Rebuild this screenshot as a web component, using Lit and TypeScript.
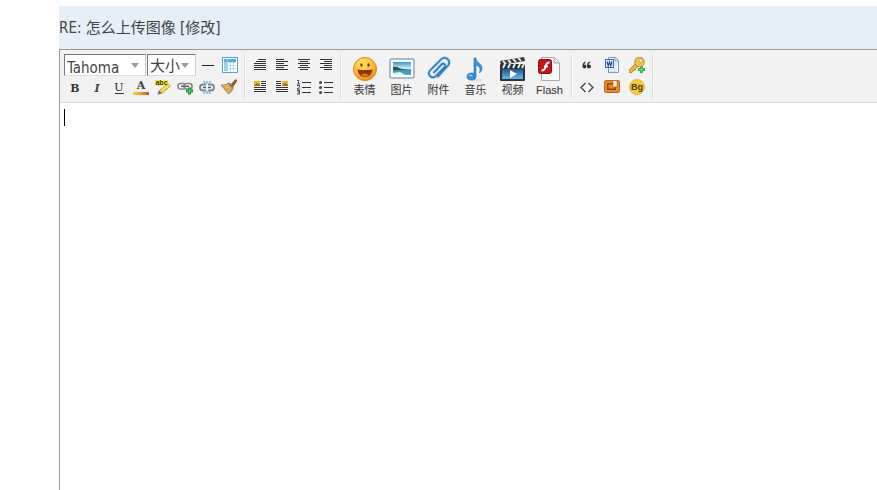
import { LitElement, html, css, svg, TemplateResult } from "lit";
import { customElement } from "lit/decorators.js";

interface Tool {
  label: string;
  art: TemplateResult;
}

const bars = (rows: number[][]) =>
  svg`${rows.map(([x, y, w]) => svg`<rect x=${x} y=${y} width=${w} height="1" fill="#333"/>`)}`;

const bold: Tool = {
  label: "Bold",
  art: svg`<text x="8" y="13" text-anchor="middle" font-family="DejaVu Serif, serif" font-weight="bold" font-size="11" fill="#333">B</text>`,
};
const italic: Tool = {
  label: "Italic",
  art: svg`<text x="8" y="13" text-anchor="middle" font-family="DejaVu Serif, serif" font-style="italic" font-weight="bold" font-size="11" fill="#444">I</text>`,
};
const underline: Tool = {
  label: "Underline",
  art: svg`<text x="8" y="12" text-anchor="middle" font-family="DejaVu Serif, serif" font-size="11" fill="#222">U</text><rect x="4" y="14" width="9" height="1" fill="#333"/>`,
};
const color: Tool = {
  label: "Text color",
  art: svg`<defs><linearGradient id="c"><stop offset="0" stop-color="#f8cf3c"/><stop offset=".5" stop-color="#ef9a37"/><stop offset="1" stop-color="#c4512c"/></linearGradient></defs>
    <text x="8" y="10" text-anchor="middle" font-family="DejaVu Serif, serif" font-weight="bold" font-size="11" fill="#444">A</text>
    <rect x="0" y="13" width="16" height="3" fill="url(#c)"/>`,
};
const highlight: Tool = {
  label: "Highlight",
  art: svg`<rect x="0" y="1" width="13" height="6" fill="#fbf04a"/>
    <text x="6.5" y="6" text-anchor="middle" font-family="Liberation Sans, sans-serif" font-weight="bold" font-size="7" fill="#333">abc</text>
    <path d="M4 13l1-2 8-6 2.500 2-8 7z" fill="#ead52a" stroke="#99861f" stroke-width=".6"/><path d="M6 12l8-6" stroke="#fff59a"/><path d="M2.500 15.500l1.500-4 3 3z" fill="#666"/>`,
};
const link: Tool = {
  label: "Insert link",
  art: svg`<g fill="#f4f5f5" stroke="#85898b" stroke-width="1.6"><rect x="1" y="4.500" width="8" height="5.500" rx="2.500"/><rect x="7" y="4.500" width="8" height="5.500" rx="2.500"/></g>
    <path d="M4 7.300h8" stroke="#666" stroke-width="1.6"/><path d="M12.500 8.500v7M9 12h7" stroke="#23913a" stroke-width="3"/><path d="M12.500 9.500v5M10 12h5" stroke="#5cc85c" stroke-width="1.200"/>`,
};
const unlink: Tool = {
  label: "Remove link",
  art: svg`<g fill="none" stroke="#7b858d" stroke-width="1.800"><path d="M7 5.500H4a3 3 0 0 0 0 6h3M9 5.500h3a3 3 0 0 1 0 6H9"/></g>
    <path d="M4 8.500h3M9 8.500h3" stroke="#475662" stroke-width="1.500"/><path d="M8 2v3M4.500 2l1.500 2.500M11.500 2L10 4.500M8 15v-3M4.500 15L6 12.500M11.500 15L10 12.500" stroke="#459bd2"/>`,
};
const brush: Tool = {
  label: "Clear format",
  art: svg`<path d="M10.500 5l4-4.500 1.500 1-3.500 5.500z" fill="#9a5725" stroke="#6d3814" stroke-width=".6"/><path d="M8 3.500l5 4-2 3-5-5z" fill="#8d7156"/>
    <path d="M7 4.500l5 5c-1 3-2.500 4-4.500 5.500L0 6c2 0 5 0 7-1.500z" fill="#d3a05c" stroke="#8e5a26" stroke-width=".6"/><path d="M2 7l6-1M4 9.500l5-2M6 12.500l4-4" stroke="#f2cb83" stroke-width=".8"/>`,
};
const rule: Tool = { label: "Horizontal line", art: svg`<rect x="2" y="8" width="12" height="1" fill="#222"/>` };
const grid: Tool = {
  label: "Table",
  art: svg`<rect x=".5" y=".5" width="15" height="15" fill="#fff" stroke="#55a3c7"/><rect x="2" y="2" width="12" height="3" fill="#4fb0dd"/><rect x="2" y="5" width="3" height="9" fill="#8fd0ee"/>
    <path d="M5.500 2v12M8.500 5v9M11.500 5v9M2 5.500h12M2 8.500h12M2 11.500h12" stroke="#a9d6ea" stroke-width=".8"/>`,
};

const alignAuto: Tool = { label: "Auto format", art: bars([[6, 2, 8], [4, 4, 10], [2, 6, 12], [2, 8, 12], [2, 10, 12], [2, 12, 12]]) };
const alignLeft: Tool = { label: "Align left", art: bars([[2, 2, 8], [2, 4, 12], [2, 6, 8], [2, 8, 12], [2, 10, 8], [2, 12, 12]]) };
const alignCenter: Tool = { label: "Align center", art: bars([[2, 2, 12], [4, 4, 8], [2, 6, 12], [4, 8, 8], [2, 10, 12], [4, 12, 8]]) };
const alignRight: Tool = { label: "Align right", art: bars([[2, 2, 12], [6, 4, 8], [2, 6, 12], [6, 8, 8], [2, 10, 12], [6, 12, 8]]) };
const floatLeft: Tool = {
  label: "Float left",
  art: svg`${bars([[9, 2, 5], [9, 4, 5], [9, 6, 5], [2, 8, 12], [2, 10, 12], [2, 12, 12]])}<rect x="2" y="2" width="6" height="5" fill="#e3bd25"/><path d="M2 7l3-3 3 2v1z" fill="#8c7310"/>`,
};
const floatRight: Tool = {
  label: "Float right",
  art: svg`${bars([[2, 2, 5], [2, 4, 5], [2, 6, 5], [2, 8, 12], [2, 10, 12], [2, 12, 12]])}<rect x="8" y="2" width="6" height="5" fill="#e3bd25"/><path d="M8 7l3-3 3 2v1z" fill="#8c7310"/>`,
};
const numbered: Tool = {
  label: "Numbered list",
  art: svg`${bars([[6, 3, 9], [6, 8, 9], [6, 13, 9]])}<path d="M1 1.500h1.500V5M1 5h3M1 6.500h2.500v1.700L1 10h3M1 11.500h2.500V15H1M1.500 13h2" fill="none" stroke="#333" stroke-width=".9"/>`,
};
const bulleted: Tool = {
  label: "Bulleted list",
  art: svg`${bars([[6, 3, 9], [6, 8, 9], [6, 13, 9]])}<g fill="#444"><circle cx="2.500" cy="3.500" r="1.500"/><circle cx="2.500" cy="8.500" r="1.500"/><circle cx="2.500" cy="13.500" r="1.500"/></g>`,
};

const quote: Tool = {
  label: "Quote",
  art: svg`<g fill="#333"><circle cx="5.500" cy="9.500" r="1.900"/><circle cx="10" cy="9.500" r="1.900"/></g><path d="M4.300 9.500c-.3-2 .2-3.500 2-4.500M8.800 9.500c-.3-2 .2-3.500 2-4.500" fill="none" stroke="#333" stroke-width="1.400"/>`,
};
const code: Tool = { label: "Code", art: svg`<path d="M6.500 4L2 8.500l4.500 4.500M9.500 4l4.500 4.500L9.500 13" fill="none" stroke="#444" stroke-width="1.300"/>` };
const word: Tool = {
  label: "Paste from Word",
  art: svg`<path d="M4.500 .500h7l3 3v12h-10z" fill="#fafcff" stroke="#7b94c0"/><path d="M11 1v3h3" fill="none" stroke="#7b94c0"/><path d="M10 6h3M10 8h3M6 12h7M6 14h7" stroke="#c3d1e8"/>
    <rect x="1.500" y="2.500" width="8" height="8" fill="#e8f0fc" stroke="#3f68b2"/><path d="M3 4.500l1.200 4.500L5.500 5l1.300 4L8 4.500" fill="none" stroke="#1d4aa0" stroke-width="1.200"/>`,
};
const key: Tool = {
  label: "Password",
  art: svg`<path d="M7 6L0 13v2.500h3l1-2h2l1-2 3-3z" fill="#e5b443" stroke="#a97b20" stroke-width=".7"/><circle cx="10.500" cy="5" r="4.800" fill="#f0c14b" stroke="#ad8025" stroke-width=".8"/><circle cx="12" cy="3.500" r="1.500" fill="#fff" stroke="#ad8025" stroke-width=".5"/>
    <path d="M12.500 9.500V16M9 12.500h7" stroke="#3aab44" stroke-width="2.800"/><path d="M12.500 10.500v4.500M10 12.500h5" stroke="#6bd070"/>`,
};
const page: Tool = {
  label: "Pagination",
  art: svg`<rect x=".500" y="1.500" width="15" height="12" rx="1.500" fill="#e8892b" stroke="#c0681a"/><rect x="3" y="4" width="9" height="7" fill="#8e4a1b"/><rect x="4.500" y="5.500" width="6" height="4" fill="#e8892b"/><rect x="9" y="1.500" width="4" height="6.500" fill="#fff8e8" stroke="#b4611b" stroke-width=".6"/>`,
};
const background: Tool = {
  label: "Background",
  art: svg`<circle cx="8" cy="8" r="7.500" fill="#f4cb3a" stroke="#e3b73a"/><text x="8" y="11" text-anchor="middle" font-family="Liberation Sans, sans-serif" font-size="9" font-weight="bold" fill="#4b3c0c">Bg</text>`,
};

const media: Tool[] = [
  {
    label: "表情",
    art: svg`<defs><radialGradient id="s" cx=".4" cy=".25" r=".8"><stop offset="0" stop-color="#ffe468"/><stop offset=".6" stop-color="#fdb72d"/><stop offset="1" stop-color="#ea8714"/></radialGradient></defs>
      <circle cx="14" cy="15" r="11.500" fill="url(#s)" stroke="#d68925"/><ellipse cx="10.500" cy="11" rx="1.200" ry="1.800" fill="#66350c"/><ellipse cx="17.500" cy="11" rx="1.200" ry="1.800" fill="#66350c"/>
      <path d="M6.500 15.500q7.500 1 15 0c-.5 5-3.500 7.500-7.500 7.500s-7-2.500-7.500-7.500z" fill="#8b3910"/><path d="M10 21q4-3 8 0-4 3-8 0z" fill="#ef7333"/>`,
  },
  {
    label: "图片",
    art: svg`<defs><linearGradient id="p" x2="0" y2="1"><stop offset="0" stop-color="#3f8fd5"/><stop offset=".5" stop-color="#d0eefa"/><stop offset=".6" stop-color="#3991b7"/><stop offset="1" stop-color="#4fa9cf"/></linearGradient></defs>
      <rect x="2" y="5" width="24" height="19" rx="1.500" fill="#fff" stroke="#91a8b5" stroke-width="1.500"/><rect x="5" y="8" width="18" height="13" fill="url(#p)"/><path d="M5 13q4-1 7 1.500l8 1.500H5z" fill="#24584f"/><path d="M5 19l7-1q3 2 6 3H5z" fill="#e3f3f3"/>`,
  },
  {
    label: "附件",
    art: svg`<g fill="none" stroke-linecap="round"><path d="M9 18.500l8-8.500a2 2 0 0 1 3 2.500l-9 9.500a4 4 0 0 1-6-5.500L16 5.500a4.600 4.600 0 0 1 7 0 4.600 4.600 0 0 1 0 6L13 22.500" stroke="#c5dfef" stroke-width="3.600"/>
      <path d="M9 18.500l8-8.500a2 2 0 0 1 3 2.500l-9 9.500a4 4 0 0 1-6-5.500L16 5.500a4.600 4.600 0 0 1 7 0 4.600 4.600 0 0 1 0 6L13 22.500" stroke="#2679bb" stroke-width="1.700"/></g>`,
  },
  {
    label: "音乐",
    art: svg`<ellipse cx="14" cy="26" rx="7" ry="1.500" fill="#dce2e6"/><path d="M12 4h2c0 5 7 6 6 11-.3 2-1.500 3-2.500 4 1.500-5-.5-7-3.500-8v11h-2z" fill="#3796da" stroke="#2672b4" stroke-width=".600"/><ellipse cx="9.500" cy="22.500" rx="4.500" ry="3.500" fill="#338fd2" stroke="#2269a5" stroke-width=".600"/><ellipse cx="8.500" cy="21.500" rx="2" ry="1" fill="#8acdf3"/>`,
  },
  {
    label: "视频",
    art: svg`<defs><linearGradient id="v" x2="0" y2="1"><stop offset="0" stop-color="#1f578d"/><stop offset="1" stop-color="#65b9ea"/></linearGradient></defs>
      <path d="M1 7l24-4 1 4L2 11z" fill="#343a40"/><path d="M4 7l3 3M9 6l3 3M14 5l3 3M19 4l3 3" stroke="#eee" stroke-width="1.800"/><rect x="1" y="10" width="25" height="17" rx="1" fill="#2b333b"/><path d="M6 10l-2 4M11 10l-2 4M16 10l-2 4M21 10l-2 4M25 10l-2 4" stroke="#eee" stroke-width="1.800"/><rect x="3" y="15" width="21" height="10" fill="url(#v)"/><path d="M11 16v8l7-4z" fill="#fff"/>`,
  },
  {
    label: "Flash",
    art: svg`<path d="M5.500 3.500h13l5 5v18h-18z" fill="#fbfbfb" stroke="#aaa"/><path d="M18 4v5h5" fill="#e6e6e6" stroke="#9eaaa2"/><rect x="2.500" y="5.500" width="13" height="14" rx="2" fill="#c4141a" stroke="#8f0c12"/><path d="M13.500 8.500c-3 0-3.500 1.500-4 4s-1.500 4-4 4M8 12.500h4" fill="none" stroke="#fff" stroke-width="2"/>`,
  },
];

@customElement("app-root")
export class AppRoot extends LitElement {
  static styles = css`
    :host {
      display: flex;
      flex-direction: column;
      box-sizing: border-box;
      min-height: 100vh;
      padding: 6px 0 0 59px;
      background: #fff;
      color: #444;
      font-family: "DejaVu Sans Condensed", "Noto Sans CJK SC", sans-serif;
    }
    .title {
      margin: 0;
      padding-top: 2px;
      background: #e6eff7;
      font-size: 15px;
      font-weight: 400;
      line-height: 41px;
    }
    .editor {
      flex: 1;
      display: flex;
      flex-direction: column;
      border: solid #999;
      border-width: 1px 0 0 1px;
    }
    .toolbar {
      display: flex;
      flex-wrap: wrap;
      padding: 4px;
      background: #f2f2f2;
      border-bottom: 1px solid #ddd;
    }
    .group {
      display: flex;
      flex-direction: column;
      justify-content: space-between;
      height: 44px;
      padding-right: 3px;
      margin-right: 4px;
      border-right: 1px solid #ddd;
      box-shadow: 1px 0 #fff;
    }
    .media {
      flex-direction: row;
      padding-left: 1px;
      margin-right: 2px;
    }
    .row {
      display: flex;
    }
    button {
      border: 0;
      padding: 0;
      background: none;
      color: #333;
      font-family: "Liberation Sans", "Noto Sans CJK SC", sans-serif;
    }
    .small {
      width: 22px;
      height: 22px;
      display: grid;
      place-items: center;
    }
    .wide .small {
      width: 25px;
    }
    .large {
      width: 37px;
      display: flex;
      flex-direction: column;
      align-items: center;
      font-size: 11px;
      line-height: 16px;
    }
    svg {
      display: block;
      flex: none;
    }
    .pick {
      display: grid;
      align-items: center;
      justify-items: end;
      margin-right: 1px;
      width: 82px;
    }
    .size {
      width: 49px;
    }
    .pick > * {
      grid-area: 1 / 1;
    }
    .pick svg {
      margin-right: 7px;
      pointer-events: none;
    }
    select {
      appearance: none;
      box-sizing: border-box;
      width: 100%;
      height: 22px;
      margin: 0;
      padding: 5px 0 0 2px;
      border: 1px solid;
      border-color: #777 #ccc #ddd #777;
      border-radius: 0;
      background: #fff;
      color: #444;
      font-family: inherit;
      font-size: 15px;
      line-height: 16px;
    }
    .size select {
      padding-top: 2px;
    }
    .page {
      flex: 1;
      display: grid;
      position: relative;
    }
    textarea {
      border: 0;
      outline: 0;
      resize: none;
      padding: 6px 4px;
      background: #fff;
      font: inherit;
    }
    .caret {
      position: absolute;
      left: 4px;
      top: 6px;
      width: 1px;
      height: 17px;
      background: #000;
    }
  `;

  private tools(list: Tool[]) {
    return list.map(
      (t) => html`<button class="small" type="button" aria-label=${t.label}>
        <svg width="16" height="16" viewBox="0 0 16 16">${t.art}</svg>
      </button>`
    );
  }

  private picker(kind: string, label: string, value: string) {
    return html`<label class="pick ${kind}">
      <select aria-label=${label}><option>${value}</option></select>
      <svg width="8" height="5" viewBox="0 0 8 5"><path d="M0 0h8L4 5z" fill="#999" /></svg>
    </label>`;
  }

  render() {
    return html`
      <h1 class="title">RE: 怎么上传图像 [修改]</h1>
      <main class="editor">
        <div class="toolbar" role="toolbar">
          <div class="group">
            <div class="row">
              ${this.picker("font", "Font", "Tahoma")}${this.picker("size", "Font size", "大小")}${this.tools([rule, grid])}
            </div>
            <div class="row">${this.tools([bold, italic, underline, color, highlight, link, unlink, brush])}</div>
          </div>
          <div class="group">
            <div class="row">${this.tools([alignAuto, alignLeft, alignCenter, alignRight])}</div>
            <div class="row">${this.tools([floatLeft, floatRight, numbered, bulleted])}</div>
          </div>
          <div class="group media">
            ${media.map(
              (t) => html`<button class="large" type="button">
                <svg width="28" height="28" viewBox="0 0 28 28">${t.art}</svg>${t.label}
              </button>`
            )}
          </div>
          <div class="group wide">
            <div class="row">${this.tools([quote, word, key])}</div>
            <div class="row">${this.tools([code, page, background])}</div>
          </div>
        </div>
        <div class="page">
          <textarea aria-label="Message"></textarea>
          <span class="caret"></span>
        </div>
      </main>
    `;
  }
}
